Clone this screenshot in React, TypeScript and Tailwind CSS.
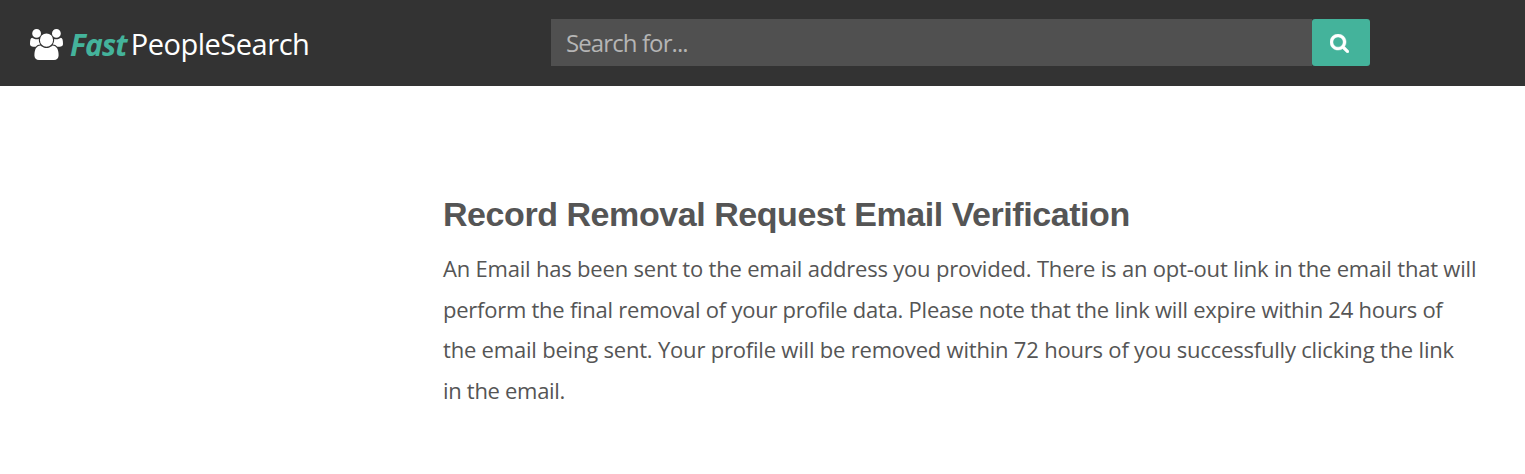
function UsersIcon() {
  return (
    <svg viewBox="0 0 1920 1792" preserveAspectRatio="none" className="mr-2 h-[31px] w-[33px]" fill="currentColor" aria-hidden="true">
      <path d="M593 896q-162 5-265 128h-134q-82 0-138-40.500t-56-118.500q0-353 124-353 6 0 43.500 21t97.500 42.500 119 21.500q67 0 133-23-5 37-5 66 0 139 81 256zM1664 1533q0 120-73 189.500t-194 69.500h-874q-121 0-194-69.500t-73-189.500q0-53 3.500-103.500t14-109 26.500-108.500 43-97.500 62-81 85.500-53.500 111.500-20q10 0 43 21.500t73 48 107 48 135 21.500 135-21.500 107-48 73-48 43-21.500q61 0 111.500 20t85.500 53.500 62 81 43 97.500 26.500 108.500 14 109 3.500 103.500zM640 256q0 106-75 181t-181 75-181-75-75-181 75-181 181-75 181 75 75 181zM1344 640q0 159-112.500 271.500t-271.500 112.500-271.500-112.500-112.500-271.500 112.500-271.500 271.500-112.500 271.500 112.500 112.500 271.500zM1920 865q0 78-56 118.500t-138 40.500h-134q-103-123-265-128 81-117 81-256 0-29-5-66 66 23 133 23 59 0 119-21.500t97.500-42.500 43.500-21q124 0 124 353zM1792 256q0 106-75 181t-181 75-181-75-75-181 75-181 181-75 181 75 75 181z" />
    </svg>
  );
}

function SearchIcon() {
  return (
    <svg viewBox="64 128 1664 1664" className="mt-[2px] mr-[3px] h-[19px] w-[19px]" fill="currentColor" stroke="currentColor" strokeWidth="40" aria-hidden="true">
      <path d="M1216 832q0-185-131.500-316.500t-316.500-131.500-316.500 131.500-131.500 316.500 131.500 316.500 316.500 131.500 316.500-131.500 131.500-316.500zm512 832q0 52-38 90t-90 38q-54 0-90-38l-343-342q-179 124-399 124-143 0-273.500-55.500t-225-150-150-225-55.500-273.500 55.500-273.500 150-225 225-150 273.500-55.500 273.500 55.500 225 150 150 225 55.500 273.500q0 220-124 399l343 343q37 37 37 90z" />
    </svg>
  );
}

function Header() {
  return (
    <header className="flex h-[86px] items-start bg-[#333333] pt-[19px] pl-[30px]">
      <a href="#" className="flex h-[50px] w-[521px] items-center text-[30px] text-white">
        <UsersIcon />
        <span className="mr-[4px] -ml-px font-bold tracking-[-0.9px] text-[#44b39b] italic">Fast</span>
        <span className="text-[29px] tracking-[-0.47px]">PeopleSearch</span>
      </a>
      <form className="flex h-[47px] w-[819px]">
        <input
          type="text"
          placeholder="Search for..."
          className="min-w-0 flex-1 bg-[#505050] px-[15px] text-[24px] tracking-[-0.9px] text-white placeholder:text-[#b5b5b5]"
        />
        <button
          type="button"
          aria-label="Search"
          className="flex w-[58px] items-center justify-center rounded-[3px] bg-[#44b39b] text-white"
        >
          <SearchIcon />
        </button>
      </form>
    </header>
  );
}

export default function App() {
  return (
    <div className="min-h-screen bg-white font-['Open_Sans','Noto_Sans',sans-serif] text-[#555555]">
      <Header />
      <main className="pt-[108px] pl-[443px]">
        <h1 className="font-['Liberation_Sans',Arial,sans-serif] text-[34px] leading-[40px] font-bold tracking-[-0.44px] whitespace-nowrap">
          Record Removal Request Email Verification
        </h1>
        <p className="mt-[14px] text-[22px] leading-[40.6px] whitespace-nowrap">
          <span className="block tracking-[-0.2px]">
            An Email has been sent to the email address you provided. There is an opt-out link in the email that will
          </span>
          <span className="block tracking-[-0.25px]">
            perform the final removal of your profile data. Please note that the link will expire within 24 hours of
          </span>
          <span className="block tracking-[-0.2px]">
            the email being sent. Your profile will be removed within 72 hours of you successfully clicking the link
          </span>
          <span className="block tracking-[-0.3px]">in the email.</span>
        </p>
      </main>
    </div>
  );
}
